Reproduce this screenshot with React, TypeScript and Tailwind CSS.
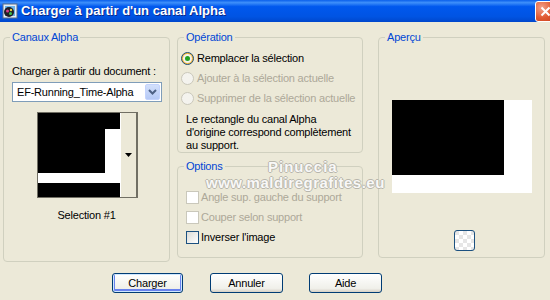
import React from 'react';

const font = "font-['Liberation_Sans',Arial,sans-serif]";

function Group({ title, className, children }: { title: string; className: string; children?: React.ReactNode }) {
  return (
    <div className={`relative border border-[#D0D0BF] rounded-[4px] ${className}`}>
      <span className="absolute left-[6px] -top-[7px] px-[2px] bg-[#ECE9D8] text-[#0046D5] leading-[13px]">{title}</span>
      {children}
    </div>
  );
}

function Radio({ checked, disabled, label }: { checked?: boolean; disabled?: boolean; label: string }) {
  return (
    <div className="h-[20px] flex items-center gap-[3px] whitespace-nowrap">
      {disabled ? (
        <span className="w-[13px] h-[13px] shrink-0 rounded-full border border-[#CAC8BB] bg-[#F4F3EE]" />
      ) : (
        <span className="w-[13px] h-[13px] shrink-0 rounded-full border border-[#1C5180] bg-[#F8B636] flex items-center justify-center">
          <span className="w-[9px] h-[9px] rounded-full bg-[#F4F3EE] flex items-center justify-center">
            {checked && <span className="w-[5px] h-[5px] rounded-full bg-[#21A121]" />}
          </span>
        </span>
      )}
      <span className={disabled ? 'text-[#ACA899]' : 'text-black'}>{label}</span>
    </div>
  );
}

function Check({ disabled, label }: { disabled?: boolean; label: string }) {
  return (
    <div className="h-[20px] flex items-center gap-[2px] whitespace-nowrap">
      <span
        className={`w-[13px] h-[13px] shrink-0 border ${
          disabled ? 'border-[#CAC8BB] bg-white' : 'border-[#1C5180] bg-[linear-gradient(135deg,#DCDCD7,#FFFFFF)]'
        }`}
      />
      <span className={disabled ? 'text-[#ACA899]' : 'text-black'}>{label}</span>
    </div>
  );
}

function XpButton({ label, primary, width }: { label: string; primary?: boolean; width: string }) {
  return (
    <button
      className={`${width} h-[20px] rounded-[3px] border border-[#003C74] bg-[linear-gradient(#FFFFFF,#F0F0EA_80%,#D6D0C5)] text-black leading-none ${
        primary ? 'shadow-[inset_0_0_0_1px_#CEE7FF,inset_0_-1px_0_2px_#6982EE]' : ''
      }`}
    >
      {label}
    </button>
  );
}

export default function App() {
  return (
    <div className={`relative w-[550px] h-[300px] overflow-hidden bg-[#ECE9D8] text-[11px] tracking-[-0.2px] ${font}`}>
      {/* Title bar */}
      <div className="h-[22px] flex items-center overflow-hidden bg-[linear-gradient(#0A5FEB,#3D8FFA_12%,#0058EE_30%,#0054E3_75%,#0047CC)]">
        <svg className="ml-[2px] w-[16px] h-[16px]" viewBox="0 0 16 16">
          <rect x="1" y="1" width="14" height="14" fill="#E8EEF4" stroke="#5A6D86" />
          <rect x="3" y="3" width="10" height="10" fill="#6CB3E8" />
          <circle cx="7" cy="9" r="5" fill="#1E1E26" />
          <circle cx="5.5" cy="8" r="1.5" fill="#D63C8C" />
          <circle cx="8.5" cy="10.5" r="1.5" fill="#3CC048" />
          <circle cx="9" cy="7" r="1.2" fill="#E8D040" />
        </svg>
        <span className="ml-[3px] text-white font-bold text-[13px] [text-shadow:1px_1px_0_#0A2A8C] tracking-[0px]">
          Charger à partir d'un canal Alpha
        </span>
        <div className="ml-auto mr-[-6px] w-[21px] h-[21px] mt-[1px] shrink-0 rounded-[3px] border border-white bg-[radial-gradient(circle_at_30%_30%,#F2A08A,#E05A32_55%,#C8401E)] flex items-center justify-center">
          <svg width="11" height="11" viewBox="0 0 11 11">
            <path d="M1.5 1.5 L9.5 9.5 M9.5 1.5 L1.5 9.5" stroke="white" strokeWidth="2" />
          </svg>
        </div>
      </div>

      <div className="flex pt-[15px]">
        {/* Canaux Alpha */}
        <Group title="Canaux Alpha" className="ml-[3px] w-[167px] h-[225px]">
          <div className="pt-[27px] pl-[8px] leading-[13px] text-black">Charger à partir du document :</div>
          <div className="mt-[4px] ml-[8px] w-[150px] h-[20px] border border-[#7F9DB9] bg-white flex items-center">
            <span className="pl-[4px] text-black">EF-Running_Time-Alpha</span>
            <span className="ml-auto mr-[1px] w-[15px] h-[16px] rounded-[2px] bg-[linear-gradient(#D3E0FB,#B5C9F6)] border border-[#C3D3FD] flex items-center justify-center">
              <svg width="9" height="6" viewBox="0 0 9 6">
                <path d="M1 1 L4.5 4.5 L8 1" stroke="#4D6185" strokeWidth="2" fill="none" />
              </svg>
            </span>
          </div>
          <div className="mt-[10px] ml-[33px] w-[101px] h-[86px] border border-[#716F64] flex bg-white">
            <svg width="82" height="84" viewBox="0 0 82 84" className="block">
              <rect width="82" height="84" fill="white" />
              <rect x="0" y="0" width="82" height="16" fill="black" />
              <rect x="0" y="0" width="67" height="60" fill="black" />
              <rect x="0" y="70" width="82" height="14" fill="black" />
            </svg>
            <div className="flex-1 bg-[#ECE9D8] border-l border-white border-r border-r-[#716F64] flex items-center justify-center">
              <svg width="7" height="4" viewBox="0 0 7 4">
                <path d="M0 0 H7 L3.5 4 Z" fill="black" />
              </svg>
            </div>
          </div>
          <div className="mt-[11px] text-center leading-[13px] text-black">Selection #1</div>
        </Group>

        {/* Middle column */}
        <div className="ml-[7px] w-[186px] flex flex-col">
          <Group title="Opération" className="h-[116px]">
            <div className="pt-[10px] pl-[3px]">
              <Radio checked label="Remplacer la sélection" />
              <Radio disabled label="Ajouter à la sélection actuelle" />
              <Radio disabled label="Supprimer de la sélection actuelle" />
            </div>
            <p className="mt-[5px] pl-[8px] pr-[4px] leading-[13px] text-black">
              Le rectangle du canal Alpha d'origine correspond complètement au support.
            </p>
          </Group>
          <Group title="Options" className="mt-[13px] h-[92px]">
            <div className="pt-[20px] pl-[8px]">
              <Check disabled label="Angle sup. gauche du support" />
              <Check disabled label="Couper selon support" />
              <Check label="Inverser l'image" />
            </div>
          </Group>
        </div>

        {/* Aperçu */}
        <Group title="Aperçu" className="ml-[15px] w-[167px] h-[221px]">
          <div className="mt-[62px] ml-[13px] w-[140px] h-[93px] bg-white">
            <div className="w-[112px] h-[75px] bg-black" />
          </div>
          <div className="mt-[37px] ml-[75px] w-[21px] h-[21px] rounded-[3px] border border-[#1C5180] bg-[repeating-conic-gradient(#FFFFFF_0_25%,#E6E6E6_0_50%)] bg-[length:8px_8px]" />
        </Group>
      </div>

      {/* Buttons */}
      <div className="flex mt-[11px] pl-[112px]">
        <XpButton primary label="Charger" width="w-[71px]" />
        <div className="ml-[27px]">
          <XpButton label="Annuler" width="w-[73px]" />
        </div>
        <div className="ml-[26px]">
          <XpButton label="Aide" width="w-[73px]" />
        </div>
      </div>

      {/* Watermark */}
      <div className="absolute left-[268px] top-[159px] leading-[15px] text-[15px] font-bold text-white/90 [text-shadow:1px_0_0_#B8B6AC,-1px_0_0_#B8B6AC,0_1px_0_#B8B6AC,0_-1px_0_#B8B6AC] tracking-[1px] pointer-events-none">
        Pinuccia
      </div>
      <div className="absolute left-[206px] top-[175px] leading-[15px] text-[15px] font-bold text-white/90 [text-shadow:1px_0_0_#B8B6AC,-1px_0_0_#B8B6AC,0_1px_0_#B8B6AC,0_-1px_0_#B8B6AC] tracking-[0.5px] pointer-events-none">
        www.maldiregrafites.eu
      </div>
    </div>
  );
}
